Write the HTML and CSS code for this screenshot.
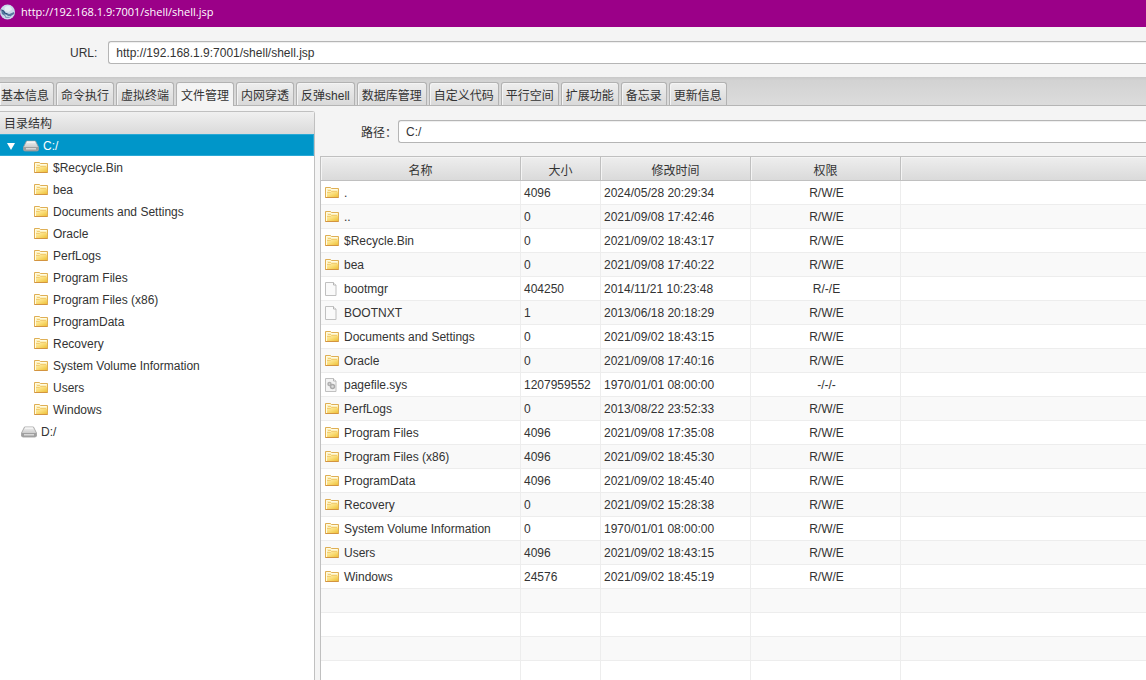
FILE: index.html
```html
<!DOCTYPE html>
<html lang="zh-CN">

<head>
    <meta charset="UTF-8">
    <meta name="viewport" content="width=device-width, initial-scale=1.0">
    <title>http://192.168.1.9:7001/shell/shell.jsp</title>
    <link rel="stylesheet" href="styles.css">
</head>

<body>
    <svg class="sprite" aria-hidden="true">
        <defs>
            <linearGradient id="gold" x1="0" y1="0" x2="1" y2="1">
                <stop offset="0" stop-color="#fff3b4" />
                <stop offset="0.5" stop-color="#fadd78" />
                <stop offset="1" stop-color="#eec13a" />
            </linearGradient>
            <linearGradient id="steel" x1="0" y1="0" x2="0" y2="1">
                <stop offset="0" stop-color="#f2f2f2" />
                <stop offset="1" stop-color="#b4b4b4" />
            </linearGradient>
        </defs>
        <symbol id="folder" viewBox="0 0 16 16">
            <path d="M1.5 12.5v-10h5l1 1h7v9z" fill="#fdf0b8" stroke="#dfaf55" />
            <path d="M2 12V7.5h4.5l1-1H14V12z" fill="url(#gold)" />
            <path d="M2.5 12V3.5H6l1 1h6.500" fill="none" stroke="#fffbe4" />
            <path d="M4 5.5h3M3 7.5h3.500l1-1H13" fill="none" stroke="#efc466" stroke-width=".8" />
            <path d="M1.5 12.5h13" stroke="#d39440" />
        </symbol>
        <symbol id="file" viewBox="0 0 16 16">
            <path d="M1.5 1.500h8l2.500 2.500v10.500H1.500z" fill="#fafafa" stroke="#c0c0c0" />
            <path d="M9.500 1.500v2.500H12" fill="#fff" stroke="#b4b4b4" />
        </symbol>
        <symbol id="sysfile" viewBox="0 0 16 16">
            <path d="M1.5 1.500h8l2.500 2.500v10.500H1.500z" fill="#f3f3f3" stroke="#c0c0c0" />
            <path d="M9.500 1.500v2.500H12" fill="#fff" stroke="#b4b4b4" />
            <circle cx="5.500" cy="7" r="1.500" fill="#ddd" stroke="#b0b0b0" stroke-width="1.5" />
            <circle cx="8.500" cy="9.500" r="2" fill="#ddd" stroke="#aaa" stroke-width="1.5" />
        </symbol>
        <symbol id="drive" viewBox="0 0 16 16">
            <path d="M3.5 3h9L15.500 9v3L14.500 13h-13L.5 12V9z" fill="url(#steel)" stroke="#9a9a9a" stroke-width=".8" />
            <path d="M1 9h14v3l-1 1H2l-1-1z" fill="#a0a0a0" />
            <path d="M3 10h10v1.500H3z" fill="#d8d8d8" />
            <path d="M4 4h8" stroke="#fff" />
        </symbol>
    </svg>

    <div class="window">
        <header class="titlebar">
            <svg class="app-icon" viewBox="0 0 16 16" aria-hidden="true">
                <circle cx="8" cy="8" r="8" fill="#c9d9ea" />
                <path d="M1 5l3 1 2 3 4 1 5-2v2l-3 2-2 2H6L5 12 2 10z" fill="#56789f" />
                <path d="M5 3q3-2 6-1l2 3-4 3-4-1z" fill="#e3edf5" />
                <path d="M6 13h5M5 11l3 1" fill="none" stroke="#dce8f2" />
                <path d="M2 6l2 1 1 2 3 1" fill="none" stroke="#254a73" />
            </svg>
            <span>http://192.168.1.9:7001/shell/shell.jsp</span>
        </header>

        <div class="url-bar">
            <label for="url">URL:</label>
            <input type="text" id="url" value="http://192.168.1.9:7001/shell/shell.jsp">
        </div>

        <nav class="tabs">
            <button type="button">基本信息</button>
            <button type="button">命令执行</button>
            <button type="button">虚拟终端</button>
            <button type="button" class="active">文件管理</button>
            <button type="button">内网穿透</button>
            <button type="button">反弹shell</button>
            <button type="button">数据库管理</button>
            <button type="button">自定义代码</button>
            <button type="button">平行空间</button>
            <button type="button">扩展功能</button>
            <button type="button">备忘录</button>
            <button type="button">更新信息</button>
        </nav>

        <main class="content">
            <aside class="tree">
                <div class="tree-title">目录结构</div>
                <ul class="drives">
                    <li>
                        <div class="tree-row drive selected"><span class="arrow"></span><svg class="icon"><use href="#drive" /></svg>C:/</div>
                        <ul class="folders">
                            <li class="tree-row"><svg class="icon"><use href="#folder" /></svg>$Recycle.Bin</li>
                            <li class="tree-row"><svg class="icon"><use href="#folder" /></svg>bea</li>
                            <li class="tree-row"><svg class="icon"><use href="#folder" /></svg>Documents and Settings</li>
                            <li class="tree-row"><svg class="icon"><use href="#folder" /></svg>Oracle</li>
                            <li class="tree-row"><svg class="icon"><use href="#folder" /></svg>PerfLogs</li>
                            <li class="tree-row"><svg class="icon"><use href="#folder" /></svg>Program Files</li>
                            <li class="tree-row"><svg class="icon"><use href="#folder" /></svg>Program Files (x86)</li>
                            <li class="tree-row"><svg class="icon"><use href="#folder" /></svg>ProgramData</li>
                            <li class="tree-row"><svg class="icon"><use href="#folder" /></svg>Recovery</li>
                            <li class="tree-row"><svg class="icon"><use href="#folder" /></svg>System Volume Information</li>
                            <li class="tree-row"><svg class="icon"><use href="#folder" /></svg>Users</li>
                            <li class="tree-row"><svg class="icon"><use href="#folder" /></svg>Windows</li>
                        </ul>
                    </li>
                    <li>
                        <div class="tree-row drive closed"><svg class="icon"><use href="#drive" /></svg>D:/</div>
                    </li>
                </ul>
            </aside>

            <section class="files">
                <div class="path-bar">
                    <label for="path">路径：</label>
                    <input type="text" id="path" value="C:/">
                </div>

                <table>
                    <colgroup>
                        <col class="col-name">
                        <col class="col-size">
                        <col class="col-time">
                        <col class="col-perm">
                        <col>
                    </colgroup>
                    <thead>
                        <tr><th>名称</th><th>大小</th><th>修改时间</th><th>权限</th><th></th></tr>
                    </thead>
                    <tbody>
                        <tr><td><svg class="icon"><use href="#folder" /></svg>.</td><td>4096</td><td>2024/05/28 20:29:34</td><td>R/W/E</td><td></td></tr>
                        <tr><td><svg class="icon"><use href="#folder" /></svg>..</td><td>0</td><td>2021/09/08 17:42:46</td><td>R/W/E</td><td></td></tr>
                        <tr><td><svg class="icon"><use href="#folder" /></svg>$Recycle.Bin</td><td>0</td><td>2021/09/02 18:43:17</td><td>R/W/E</td><td></td></tr>
                        <tr><td><svg class="icon"><use href="#folder" /></svg>bea</td><td>0</td><td>2021/09/08 17:40:22</td><td>R/W/E</td><td></td></tr>
                        <tr><td><svg class="icon"><use href="#file" /></svg>bootmgr</td><td>404250</td><td>2014/11/21 10:23:48</td><td>R/-/E</td><td></td></tr>
                        <tr><td><svg class="icon"><use href="#file" /></svg>BOOTNXT</td><td>1</td><td>2013/06/18 20:18:29</td><td>R/W/E</td><td></td></tr>
                        <tr><td><svg class="icon"><use href="#folder" /></svg>Documents and Settings</td><td>0</td><td>2021/09/02 18:43:15</td><td>R/W/E</td><td></td></tr>
                        <tr><td><svg class="icon"><use href="#folder" /></svg>Oracle</td><td>0</td><td>2021/09/08 17:40:16</td><td>R/W/E</td><td></td></tr>
                        <tr><td><svg class="icon"><use href="#sysfile" /></svg>pagefile.sys</td><td>1207959552</td><td>1970/01/01 08:00:00</td><td>-/-/-</td><td></td></tr>
                        <tr><td><svg class="icon"><use href="#folder" /></svg>PerfLogs</td><td>0</td><td>2013/08/22 23:52:33</td><td>R/W/E</td><td></td></tr>
                        <tr><td><svg class="icon"><use href="#folder" /></svg>Program Files</td><td>4096</td><td>2021/09/08 17:35:08</td><td>R/W/E</td><td></td></tr>
                        <tr><td><svg class="icon"><use href="#folder" /></svg>Program Files (x86)</td><td>4096</td><td>2021/09/02 18:45:30</td><td>R/W/E</td><td></td></tr>
                        <tr><td><svg class="icon"><use href="#folder" /></svg>ProgramData</td><td>4096</td><td>2021/09/02 18:45:40</td><td>R/W/E</td><td></td></tr>
                        <tr><td><svg class="icon"><use href="#folder" /></svg>Recovery</td><td>0</td><td>2021/09/02 15:28:38</td><td>R/W/E</td><td></td></tr>
                        <tr><td><svg class="icon"><use href="#folder" /></svg>System Volume Information</td><td>0</td><td>1970/01/01 08:00:00</td><td>R/W/E</td><td></td></tr>
                        <tr><td><svg class="icon"><use href="#folder" /></svg>Users</td><td>4096</td><td>2021/09/02 18:43:15</td><td>R/W/E</td><td></td></tr>
                        <tr><td><svg class="icon"><use href="#folder" /></svg>Windows</td><td>24576</td><td>2021/09/02 18:45:19</td><td>R/W/E</td><td></td></tr>
                        <tr><td></td><td></td><td></td><td></td><td></td></tr>
                        <tr><td></td><td></td><td></td><td></td><td></td></tr>
                        <tr><td></td><td></td><td></td><td></td><td></td></tr>
                        <tr><td></td><td></td><td></td><td></td><td></td></tr>
                    </tbody>
                </table>
            </section>
        </main>
    </div>
</body>

</html>
```
FILE: styles.css
```css
* {
    box-sizing: border-box;
}

body {
    margin: 0;
    font-family: "Liberation Sans", "Noto Sans CJK SC", sans-serif;
    font-size: 12px;
    line-height: 16px;
    color: #333;
    background: #f4f4f4;
}

input,
button {
    font: inherit;
    color: inherit;
}

ul {
    list-style: none;
    margin: 0;
    padding: 0;
}

.sprite {
    position: absolute;
    width: 0;
    height: 0;
}

.icon {
    width: 16px;
    height: 16px;
    flex: none;
}

.window {
    display: flex;
    flex-direction: column;
    height: 100vh;
    overflow: hidden;
}

.titlebar {
    display: flex;
    align-items: center;
    gap: 6px;
    flex: none;
    height: 27px;
    padding-bottom: 3px;
    background: #9b0088;
    color: #fff;
    font-family: "Open Sans", sans-serif;
    font-size: 11px;
}

.app-icon {
    width: 15px;
    height: 16px;
}

.url-bar {
    display: flex;
    align-items: center;
    flex: none;
    height: 50px;
    padding: 1px 0 0 70px;
    gap: 11px;
}

.url-bar input,
.path-bar input {
    flex: 1;
    min-width: 0;
    height: 23px;
    padding: 0 7px;
    border: 1px solid #b5b5b5;
    border-right: 0;
    border-radius: 3px 0 0 3px;
    background: #fff;
    box-shadow: inset 0 1px 1px #eee;
}

/* tabs */
.tabs {
    display: flex;
    align-items: flex-end;
    gap: 2px;
    flex: none;
    height: 29px;
    border-bottom: 1px solid #b5b5b5;
    background: linear-gradient(#c8c8c8, #d2d2d2 3px, #dcdcdc);
}

.tabs button {
    height: 23px;
    padding: 3px 4px 0;
    border: 1px solid #b2b2b2;
    border-bottom: 0;
    border-radius: 3px 3px 0 0;
    background: linear-gradient(#eee, #d9d9d9);
    box-shadow: inset 1px 1px #f4f4f4;
    white-space: nowrap;
}

.tabs button:first-child {
    padding-left: 1px;
    border-left: 0;
    border-top-left-radius: 0;
}

.tabs button.active {
    height: 24px;
    margin-bottom: -1px;
    background: #f4f4f4;
}

.content {
    display: flex;
    flex: 1;
    min-height: 0;
    padding-top: 5px;
    gap: 5px;
}

/* directory tree */
.tree {
    flex: none;
    width: 315px;
    border: 1px solid #c0c0c0;
    border-width: 1px 1px 0 0;
    border-top-right-radius: 3px;
    background: #fff;
}

.tree-title {
    height: 22px;
    padding: 4px 4px 2px;
    background: linear-gradient(#f0f0f0, #dadada);
}

.tree-row {
    display: flex;
    align-items: center;
    gap: 4px;
    height: 22px;
    padding-top: 2px;
}

.folders .tree-row {
    padding-left: 33px;
}

.drive.selected {
    padding-left: 7px;
    background: #0096c9;
    border: 1px solid #2aa9d6;
    border-left: 0;
    color: #fff;
}

.drive.closed {
    padding-left: 21px;
}

.arrow {
    width: 8px;
    margin-right: 4px;
    border: 4px solid transparent;
    border-top: 7px solid #fff;
    border-bottom: 0;
}

/* file list */
.files {
    flex: 1;
    min-width: 0;
}

.path-bar {
    display: flex;
    align-items: center;
    height: 45px;
    padding: 0 0 4px 41px;
    gap: 1px;
}

.path-bar label {
    padding-top: 2px;
}

table {
    width: 100%;
    table-layout: fixed;
    border-collapse: separate;
    border-spacing: 0;
    border-top: 1px solid #c0c0c0;
    border-left: 1px solid #c0c0c0;
    background: #fff;
}

.col-name {
    width: 200px;
}

.col-size {
    width: 80px;
}

.col-time,
.col-perm {
    width: 150px;
}

th {
    height: 24px;
    padding: 4px 0 0;
    border-right: 1px solid #c0c0c0;
    border-bottom: 1px solid #c0c0c0;
    background: linear-gradient(#eee, #dadada);
    box-shadow: inset 1px 1px #f4f4f4;
    font-weight: normal;
}

td {
    height: 24px;
    padding: 0 3px;
    border-right: 1px solid #ededed;
    border-bottom: 1px solid #ededed;
    white-space: nowrap;
}

td:nth-child(4) {
    padding-left: 5px;
    text-align: center;
}

th:last-child,
td:last-child {
    border-right: 0;
}

td .icon {
    margin-right: 4px;
    vertical-align: -4px;
}

tbody tr:nth-child(even) {
    background: #f9f9f9;
}
```
